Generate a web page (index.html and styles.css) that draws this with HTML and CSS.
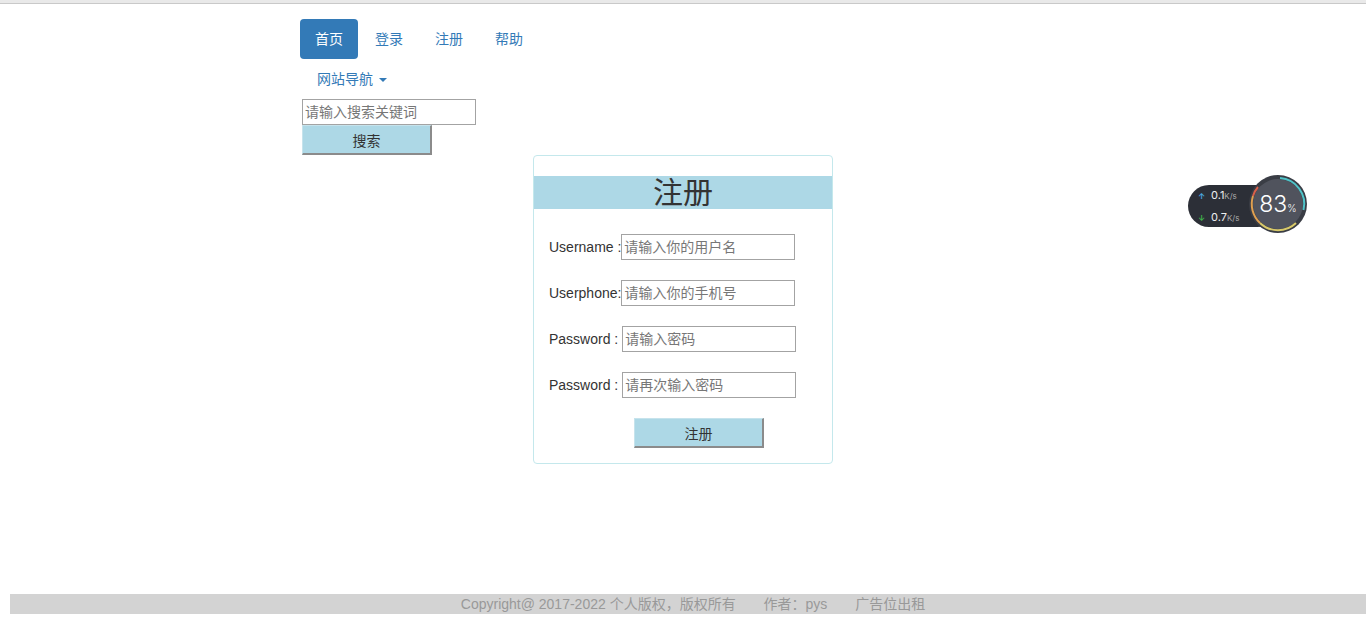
FILE: index.html
```html
<!DOCTYPE html>
<html lang="zh-CN">

<head>
  <meta charset="UTF-8">
  <meta name="viewport" content="width=device-width, initial-scale=1.0">
  <title>注册</title>
  <link rel="stylesheet" href="styles.css">
</head>

<body>
  <div class="topline"></div>

  <div class="header">
    <ul class="nav-pills">
      <li class="active"><a href="#">首页</a></li>
      <li><a href="#">登录</a></li>
      <li><a href="#">注册</a></li>
      <li><a href="#">帮助</a></li>
    </ul>
    <div class="dropdown">
      <a href="#">网站导航 <span class="caret"></span></a>
    </div>
    <form class="search">
      <input type="text" class="search-input" placeholder="请输入搜索关键词">
      <button type="button" class="btn search-btn">搜索</button>
    </form>
  </div>

  <div class="reg-box">
    <h2 class="reg-title">注册</h2>
    <form class="reg-form">
      <div class="reg-row">Username :<input type="text" placeholder="请输入你的用户名"></div>
      <div class="reg-row">Userphone:<input type="text" placeholder="请输入你的手机号"></div>
      <div class="reg-row">Password : <input type="password" placeholder="请输入密码"></div>
      <div class="reg-row">Password : <input type="password" placeholder="请再次输入密码"></div>
      <div class="reg-row"><button type="button" class="btn reg-btn">注册</button></div>
    </form>
  </div>

  <div class="footer">
    <span>Copyright@ 2017-2022 个人版权，版权所有</span>
    <span>作者：pys</span>
    <span>广告位出租</span>
  </div>

  <!-- speed widget overlay -->
  <div class="speed">
    <div class="speed-pill">
      <div class="speed-line"><span class="dot up">&#8593;</span>0.1<small>K/s</small></div>
      <div class="speed-line"><span class="dot down">&#8595;</span>0.7<small>K/s</small></div>
    </div>
    <div class="speed-ring">
      <svg width="60" height="60" viewBox="0 0 60 60">
        <circle cx="30" cy="30" r="29" fill="#3a3d45"/>
        <circle cx="30" cy="30" r="25" fill="#50535d"/>
        <path d="M32 4 A26 26 0 0 1 55.5 36" fill="none" stroke="#4fc3c8" stroke-width="2"/>
        <path d="M48 49 A26 26 0 0 1 12 49" fill="none" stroke="#d8c96a" stroke-width="2"/>
        <path d="M12 49 A26 26 0 0 1 5 22" fill="none" stroke="#e0a050" stroke-width="2"/>
        <path d="M5 22 A26 26 0 0 1 10 13" fill="none" stroke="#d8604a" stroke-width="2"/>
      </svg>
      <div class="speed-num">83<small>%</small></div>
    </div>
  </div>
</body>

</html>
```

FILE: styles.css
```css
    body {
      margin: 0;
      font-family: "Liberation Sans", Arial, "Noto Sans CJK SC", sans-serif;
      font-size: 14px;
      line-height: 20px;
      color: #333;
      background-color: #fff;
    }

    .topline {
      height: 3px;
      background-color: #e9e9e9;
      border-bottom: 1px solid #c9c9c9;
    }

    .header {
      margin: 15px 0 0 300px;
    }

    .nav-pills {
      display: flex;
      list-style: none;
      margin: 0;
      padding: 0;
      gap: 2px;
    }

    .nav-pills a,
    .dropdown a {
      display: block;
      padding: 10px 15px;
      color: #337ab7;
      text-decoration: none;
      border-radius: 4px;
    }

    .nav-pills .active a {
      background-color: #337ab7;
      color: #fff;
    }

    .dropdown a {
      display: inline-block;
      padding-left: 17px;
    }

    .caret {
      display: inline-block;
      width: 0;
      height: 0;
      margin-left: 2px;
      vertical-align: middle;
      border-top: 4px solid #337ab7;
      border-left: 4px solid transparent;
      border-right: 4px solid transparent;
    }

    .search {
      margin: 0 0 0 2px;
    }

    input[type="text"],
    input[type="password"] {
      box-sizing: border-box;
      width: 174px;
      height: 26px;
      margin: 0;
      padding: 0 2px;
      border: 1px solid #a3a3a3;
      font-family: "Liberation Sans", Arial, "Noto Sans CJK SC", sans-serif;
      font-size: 14px;
      color: #333;
      vertical-align: middle;
    }

    input::placeholder {
      color: #777;
    }

    .search-input {
      display: block;
    }

    .btn {
      box-sizing: border-box;
      display: block;
      width: 130px;
      height: 30px;
      margin: 0;
      padding: 0;
      background-color: #add8e6;
      border-style: solid;
      border-width: 1px 2px 2px 1px;
      border-color: #c6e3ec #8b8b8b #8b8b8b #c6e3ec;
      font-family: "Liberation Sans", Arial, "Noto Sans CJK SC", sans-serif;
      font-size: 14px;
      color: #333;
      cursor: pointer;
    }

    .reg-box {
      width: 300px;
      box-sizing: border-box;
      margin: 0 auto;
      border: 1px solid #c4e8ec;
      border-radius: 4px;
      padding: 20px 0 15px;
    }

    .reg-title {
      margin: 0;
      height: 33px;
      line-height: 33px;
      font-size: 30px;
      font-weight: normal;
      text-align: center;
      background-color: #add8e6;
      color: #333;
    }

    .reg-form {
      padding: 25px 0 0 15px;
    }

    .reg-row {
      display: flex;
      align-items: center;
      white-space: pre;
      height: 26px;
      margin-bottom: 20px;
    }

    .reg-row:last-child {
      height: 30px;
      margin-bottom: 0;
    }

    .reg-btn {
      margin-left: 85px;
    }

    .footer {
      margin: 130px 0 0 10px;
      height: 20px;
      line-height: 20px;
      padding-left: 10px;
      background-color: #d3d3d3;
      color: #999;
      text-align: center;
    }

    .footer span {
      margin: 0 12px;
    }

    .speed {
      position: absolute;
      left: 1188px;
      top: 174px;
      width: 122px;
      height: 62px;
    }

    .speed-pill {
      position: absolute;
      left: 0;
      top: 11px;
      width: 90px;
      height: 42px;
      box-sizing: border-box;
      padding: 0 0 0 10px;
      border-radius: 21px;
      background-color: #2c2f37;
      font-family: "Inter", "Liberation Sans", sans-serif;
      font-size: 11px;
      line-height: 21px;
      color: #eee;
    }

    .speed-line small {
      font-size: 8px;
      color: #aaa;
    }

    .dot {
      display: inline-block;
      width: 8px;
      font-size: 8px;
      font-weight: bold;
      margin-right: 5px;
    }

    .dot.up {
      color: #4aa8e0;
    }

    .dot.down {
      color: #3fb24a;
    }

    .speed-ring {
      position: absolute;
      left: 60px;
      top: 0;
      width: 60px;
      height: 60px;
    }

    .speed-ring svg {
      display: block;
    }

    .speed-num {
      position: absolute;
      left: 0;
      top: 0;
      width: 60px;
      line-height: 60px;
      text-align: center;
      font-family: "Inter", "Liberation Sans", sans-serif;
      font-size: 23px;
      font-weight: 300;
      color: #fff;
    }

    .speed-num small {
      font-size: 10px;
    }
```
